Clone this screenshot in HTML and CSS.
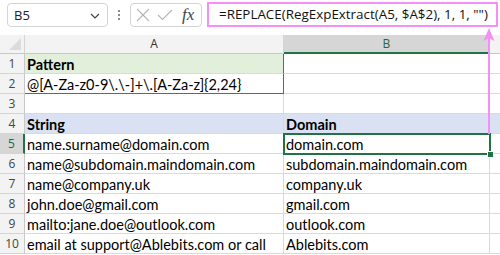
FILE: index.html
```html
<!DOCTYPE html>
<html>
<head>
<meta charset="utf-8">
<link rel="stylesheet" href="styles.css">
</head>
<body>
<div class="sheet">
  <div class="topbar">
    <div class="namebox">
      <span class="ref">B5</span>
      <svg class="chev" width="10" height="6" viewBox="0 0 10 6"><path d="M1 1 L5 5 L9 1" fill="none" stroke="#444" stroke-width="1.2"/></svg>
    </div>
    <div class="dots"><i></i><i></i><i></i></div>
    <div class="fxbox">
      <svg width="14" height="14" viewBox="0 0 14 14"><path d="M1 1 L13 13 M13 1 L1 13" stroke="#b5b5b5" stroke-width="1.1" fill="none"/></svg>
      <svg width="16" height="12" viewBox="0 0 16 12"><path d="M1 6 L5.5 10.5 L15 1" stroke="#b5b5b5" stroke-width="1.1" fill="none"/></svg>
      <span class="fx">fx</span>
    </div>
    <div class="formula">=REPLACE(RegExpExtract(A5, $A$2), 1, 1, "")</div>
  </div>

  <div class="grid">
    <div class="corner"><span class="tri"></span></div>
    <div class="colh">A</div>
    <div class="colh sel">B</div>
    <div class="colh last"></div>

    <div class="rowh">1</div>
    <div class="cell bold green boxr">Pattern</div>
    <div class="cell"></div>
    <div class="cell last"></div>

    <div class="rowh">2</div>
    <div class="cell boxr boxb">@[A-Za-z0-9\.\-]+\.[A-Za-z]{2,24}</div>
    <div class="cell"></div>
    <div class="cell last"></div>

    <div class="rowh">3</div>
    <div class="cell"></div>
    <div class="cell"></div>
    <div class="cell last"></div>

    <div class="rowh">4</div>
    <div class="cell bold blue">String</div>
    <div class="cell bold blue">Domain</div>
    <div class="cell last blue"></div>

    <div class="rowh sel">5</div>
    <div class="cell">name.surname@domain.com</div>
    <div class="cell">domain.com</div>
    <div class="cell last"></div>

    <div class="rowh">6</div>
    <div class="cell">name@subdomain.maindomain.com</div>
    <div class="cell">subdomain.maindomain.com</div>
    <div class="cell last"></div>

    <div class="rowh">7</div>
    <div class="cell">name@company.uk</div>
    <div class="cell">company.uk</div>
    <div class="cell last"></div>

    <div class="rowh">8</div>
    <div class="cell">john.doe@gmail.com</div>
    <div class="cell">gmail.com</div>
    <div class="cell last"></div>

    <div class="rowh">9</div>
    <div class="cell">mailto:jane.doe@outlook.com</div>
    <div class="cell">outlook.com</div>
    <div class="cell last"></div>

    <div class="rowh">10</div>
    <div class="cell">email at support@Ablebits.com or call</div>
    <div class="cell">Ablebits.com</div>
    <div class="cell last"></div>

    <div class="selection"><span class="handle"></span></div>
    <svg class="arrow" width="14" height="110" viewBox="0 0 14 110">
      <path d="M7 8 L7 106" stroke="#f58ef5" stroke-width="2"/>
      <path d="M7 0 L1.5 13 L7 10 L12.5 13 Z" fill="#f58ef5"/>
    </svg>
  </div>
</div>
</body>
</html>
```

FILE: styles.css
```css
* { box-sizing: border-box; }
html, body { margin: 0; padding: 0; background: #fff; }
.sheet { width: 500px; height: 255px; overflow: hidden; position: relative; background: #fff; }

.topbar {
  height: 35px;
  display: flex;
  align-items: flex-start;
  padding-top: 3px;
  background: #fff;
}
.namebox {
  margin-left: 7px;
  width: 101px;
  height: 24px;
  border: 1px solid #d4d4d4;
  border-radius: 4px;
  display: flex;
  align-items: center;
  justify-content: space-between;
  padding: 0 7px 0 6px;
  font-family: "Open Sans", sans-serif;
  font-size: 13px;
  color: #222;
}
.chev { margin-top: 1px; }
.dots {
  width: 22px;
  height: 24px;
  display: flex;
  flex-direction: column;
  align-items: center;
  justify-content: center;
  gap: 2px;
}
.dots i { display: block; width: 2px; height: 2px; background: #8a8a8a; }
.fxbox {
  width: 72px;
  height: 24px;
  border: 1px solid #d4d4d4;
  border-radius: 4px;
  display: flex;
  align-items: center;
  gap: 7px;
  padding-left: 5px;
}
.fx {
  font-family: "Liberation Serif", serif;
  font-style: italic;
  font-size: 17px;
  color: #444;
  margin-left: 2px;
  line-height: 1;
  margin-top: -2px;
}
.formula {
  margin-left: 5px;
  margin-top: -1px;
  width: 291px;
  height: 25px;
  border: 2px solid #f58ef5;
  padding-left: 10px;
  font-family: "Open Sans", sans-serif;
  font-size: 13.4px;
  line-height: 21px;
  color: #111;
  white-space: nowrap;
  overflow: hidden;
}

.grid {
  position: relative;
  display: grid;
  grid-template-columns: 25px 259px 206px 10px;
  grid-template-rows: 19px repeat(10, 20px);
  font-family: "Lato", sans-serif;
}
.corner {
  background: #f3f3f3;
  border-right: 1px solid #d4d4d4;
  border-bottom: 1px solid #c8c8c8;
  position: relative;
}
.tri {
  position: absolute;
  right: 3px;
  bottom: 3px;
  width: 0; height: 0;
  border-left: 12px solid transparent;
  border-bottom: 12px solid #dcdcdc;
}
.colh {
  background: #f3f3f3;
  border-right: 1px solid #d4d4d4;
  border-bottom: 1px solid #c8c8c8;
  text-align: center;
  font-family: "Open Sans", sans-serif;
  font-size: 12px;
  line-height: 18px;
  color: #333;
}
.colh.sel {
  background: #d6d6d6;
  color: #1e6b41;
  border-bottom: 2px solid #217346;
}
.colh.last { border-right: none; }
.rowh {
  background: #f3f3f3;
  border-right: 1px solid #c8c8c8;
  border-bottom: 1px solid #d4d4d4;
  text-align: center;
  font-family: "Open Sans", sans-serif;
  font-size: 12px;
  line-height: 20px;
  color: #444;
}
.rowh.sel {
  background: #d6d6d6;
  color: #1e6b41;
  border-right: 2px solid #217346;
}
.cell {
  border-right: 1px solid #dadada;
  border-bottom: 1px solid #dadada;
  font-size: 14.5px;
  line-height: 19px;
  padding: 1px 0 0 2px;
  color: #000;
  white-space: nowrap;
  overflow: visible;
}
.cell.last { border-right: none; }
.bold { font-weight: bold; }
.green { background: #e2efda; }
.blue { background: #d9e1f2; }
.boxr { border-right: 1px solid #666; }
.boxb { border-bottom: 1px solid #666; }

.selection {
  position: absolute;
  left: 283px;
  top: 98px;
  width: 208px;
  height: 22px;
  border: 2px solid #217346;
}
.handle {
  position: absolute;
  right: -5px;
  bottom: -5px;
  width: 7px;
  height: 7px;
  background: #217346;
  border: 1px solid #fff;
}
.arrow {
  position: absolute;
  left: 482px;
  top: -7px;
}
```
